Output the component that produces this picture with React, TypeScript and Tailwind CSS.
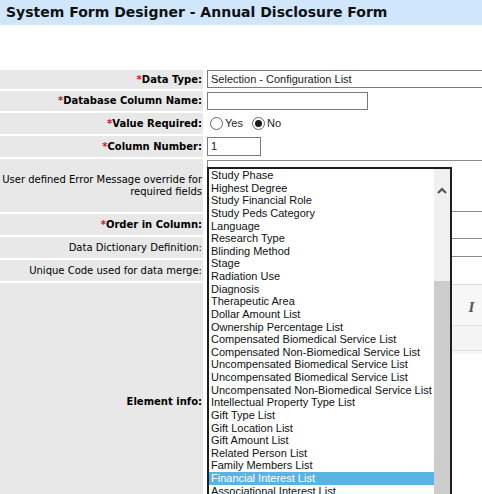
import React from "react";

const OPTIONS = [
  "Study Phase",
  "Highest Degree",
  "Study Financial Role",
  "Study Peds Category",
  "Language",
  "Research Type",
  "Blinding Method",
  "Stage",
  "Radiation Use",
  "Diagnosis",
  "Therapeutic Area",
  "Dollar Amount List",
  "Ownership Percentage List",
  "Compensated Biomedical Service List",
  "Compensated Non-Biomedical Service List",
  "Uncompensated Biomedical Service List",
  "Uncompensated Biomedical Service List",
  "Uncompensated Non-Biomedical Service List",
  "Intellectual Property Type List",
  "Gift Type List",
  "Gift Location List",
  "Gift Amount List",
  "Related Person List",
  "Family Members List",
  "Financial Interest List",
  "Associational Interest List",
];

const labelFont = { fontFamily: '"DejaVu Sans", Verdana, sans-serif' };
const valueFont = { fontFamily: '"Liberation Sans", Arial, sans-serif' };

function Label({
  text,
  required,
  bold = true,
}: {
  text: React.ReactNode;
  required?: boolean;
  bold?: boolean;
}) {
  return (
    <div
      style={labelFont}
      className={`flex items-center justify-end bg-[#e8e8e8] pr-[1px] text-right text-[10px] leading-[12px] text-black ${
        bold ? "font-bold" : "font-normal"
      }`}
    >
      <span>
        {required && <span className="text-[#cc1133]">*</span>}
        {text}
      </span>
    </div>
  );
}

function Radio({ checked }: { checked?: boolean }) {
  return (
    <span className="flex h-[13px] w-[13px] items-center justify-center rounded-full border border-[#666] bg-white">
      {checked && <span className="h-[7px] w-[7px] rounded-full bg-[#1a1a1a]" />}
    </span>
  );
}

// toolbar slots hidden under the open list; only the italic one shows
const TOOLBAR_SLOTS = 10;

export default function App() {
  return (
    <div className="relative h-[494px] w-[482px] overflow-hidden bg-white">
      <div className="flex h-[25px] items-center bg-[#d0e6fb] pl-[6px]">
        <h1 style={labelFont} className="text-[14px] font-bold text-[#111]">
          System Form Designer - Annual Disclosure Form
        </h1>
      </div>

      <div className="h-[45px]" />

      <div className="grid grid-cols-[203px_300px] grid-rows-[19px_20px_21px_21px_53px_21px_21px_21px_238px] gap-[2px]">
        <Label text="Data Type:" required />
        <div className="pl-[2px]">
          <div
            style={valueFont}
            className="flex h-[18px] items-center border border-[#7a7a7a] pl-[3px] text-[11px] text-[#222]"
          >
            Selection - Configuration List
          </div>
        </div>

        <Label text="Database Column Name:" required />
        <div className="pl-[2px] pt-[1px]">
          <div className="h-[18px] w-[161px] border border-[#7a7a7a]" />
        </div>

        <Label text="Value Required:" required />
        <div
          style={valueFont}
          className="flex items-center pl-[5px] text-[11px] text-[#222]"
        >
          <Radio />
          <span className="ml-[2px] mr-[9px]">Yes</span>
          <Radio checked />
          <span className="ml-[2px]">No</span>
        </div>

        <Label text="Column Number:" required />
        <div className="pl-[2px] pt-[1px]">
          <div
            style={valueFont}
            className="flex h-[19px] w-[54px] items-center border border-[#7a7a7a] pl-[3px] text-[11px] text-[#222]"
          >
            1
          </div>
        </div>

        <Label
          bold={false}
          text={
            <>
              User defined Error Message override for
              <br />
              required fields
            </>
          }
        />
        <div className="pl-[2px] pt-[1px]">
          <div className="h-[52px] border border-[#8a8a8a]" />
        </div>

        <Label text="Order in Column:" required />
        <div className="pl-[2px] pt-[1px]">
          <div className="h-[19px] w-[54px] border border-[#8a8a8a]" />
        </div>

        <Label bold={false} text="Data Dictionary Definition:" />
        <div className="pl-[2px] pt-[1px]">
          <div className="h-[19px] border border-[#8a8a8a]" />
        </div>

        <Label bold={false} text="Unique Code used for data merge:" />
        <div className="pl-[2px] pt-[1px]">
          <div className="h-[19px] w-[160px] border border-[#8a8a8a]" />
        </div>

        <Label text="Element info:" />
        <div className="pl-[2px] pt-[1px]">
          <div className="flex h-[236px] flex-col border border-[#dcdcdc]">
            <div className="flex flex-col bg-[#f7f7f7]">
              <div className="flex h-[40px] items-center pl-[1px] pt-[4px]">
                {Array.from({ length: TOOLBAR_SLOTS }).map((_, i) => (
                  <span key={i} className="h-[20px] w-[25px]" />
                ))}
                <span
                  style={{ fontFamily: '"Liberation Serif", serif' }}
                  className="flex w-[25px] justify-center text-[15px] font-bold italic text-[#555]"
                >
                  I
                </span>
              </div>
              <div className="flex h-[29px] items-start gap-[6px] pl-[1px]">
                <div className="flex h-[26px] w-[265px] items-center justify-end rounded-[3px] border border-[#dedede] bg-[#f4f4f4] pr-[5px]">
                  <svg width="7" height="4" viewBox="0 0 7 4">
                    <path d="M0 0 L7 0 L3.5 4 Z" fill="#666" />
                  </svg>
                </div>
                <div className="h-[26px] w-[60px] rounded-[3px] border border-[#dedede] bg-[#f4f4f4]" />
              </div>
            </div>
            <div className="flex-1 bg-white" />
            <div className="h-[20px] bg-[#e6e6e6]" />
          </div>
        </div>
      </div>

      {/* open dropdown list */}
      <div className="absolute left-[207px] top-[167px] flex h-[340px] w-[245px] border-2 border-[#1e1e1e] bg-white">
        <ul style={valueFont} className="w-[225px] text-[11px] text-[#111]">
          {OPTIONS.map((o, i) => (
            <li
              key={i}
              className={`h-[12.64px] whitespace-nowrap pl-[2px] leading-[12.64px] ${
                o === "Financial Interest List" ? "bg-[#59b4e4] text-white" : ""
              }`}
            >
              {o}
            </li>
          ))}
        </ul>
        <div className="flex w-[16px] flex-col">
          <div className="flex h-[112px] justify-center bg-[#f0f0f0] pt-[18px]">
            <svg width="10" height="7" viewBox="0 0 10 7">
              <path
                d="M1 6 L5 2 L9 6"
                fill="none"
                stroke="#555"
                strokeWidth="2.2"
              />
            </svg>
          </div>
          <div className="flex-1 bg-[#cdcdcd]" />
        </div>
      </div>
    </div>
  );
}
